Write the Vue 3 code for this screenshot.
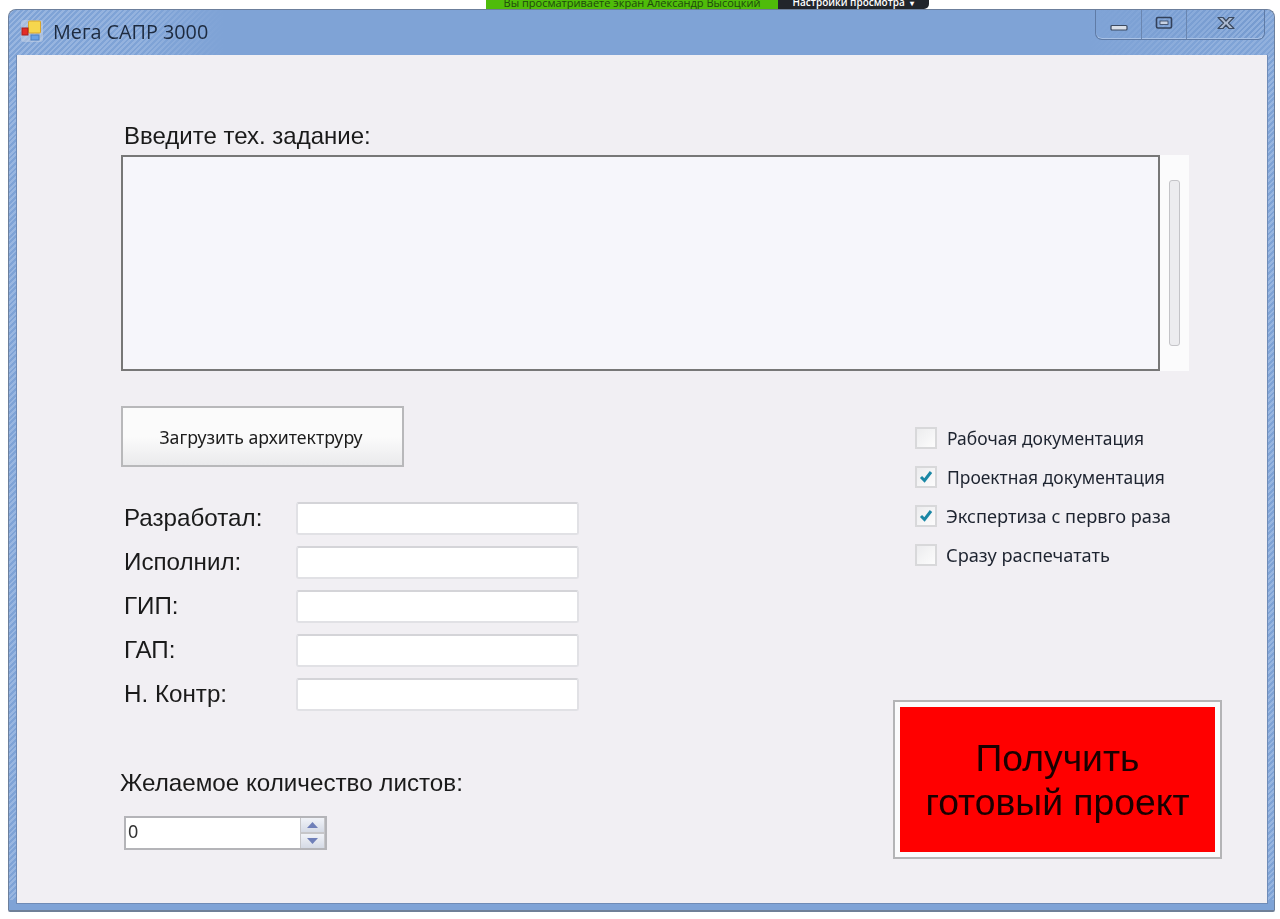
<script setup>
const people = ['Разработал:', 'Исполнил:', 'ГИП:', 'ГАП:', 'Н. Контр:']
const options = [
  { label: 'Рабочая документация', checked: false },
  { label: 'Проектная документация', checked: true },
  { label: 'Экспертиза с первго раза', checked: true },
  { label: 'Сразу распечатать', checked: false }
]
</script>

<template>
  <div class="page">
    <div class="share-bar">
      <span class="share-green">Вы просматриваете экран Александр Высоцкий</span>
      <span class="share-dark">Настройки просмотра <small>▾</small></span>
    </div>
    <div class="window">
      <header class="titlebar">
        <svg class="app-icon" width="24" height="24" viewBox="0 0 24 24">
          <rect x="1" y="1" width="22" height="22" rx="3" fill="#c9d3e6" opacity=".55" />
          <rect x="8.5" y="2" width="12" height="12" rx="1" fill="#f6d64e" stroke="#d9a52a" />
          <rect x="2" y="9" width="6" height="7" fill="#e42c25" stroke="#a82020" />
          <rect x="11" y="16" width="8" height="5" fill="#6aa2e6" stroke="#4c7fc0" />
        </svg>
        <span class="title">Мега САПР 3000</span>
        <div class="controls">
          <div class="ctl ctl-min">
            <svg width="18" height="8" viewBox="0 0 18 8"><rect x="1" y="1.5" width="16" height="4.5" rx="1" fill="#d9dfe8" stroke="#3c4a60" stroke-width="1.2" /></svg>
          </div>
          <div class="ctl ctl-max">
            <svg width="18" height="14" viewBox="0 0 18 14"><rect x="1.5" y="1.5" width="15" height="10.5" rx="1.5" fill="none" stroke="#33415a" stroke-width="1.6" /><rect x="5" y="5" width="8" height="3.5" fill="#c8d3e4" stroke="#33415a" stroke-width=".8" /></svg>
          </div>
          <div class="ctl ctl-close">
            <svg width="20" height="14" viewBox="0 0 20 14"><path d="M2 1.5 L7 1.5 L10 5 L13 1.5 L18 1.5 L12.5 7 L18 12.5 L13 12.5 L10 9 L7 12.5 L2 12.5 L7.5 7 Z" fill="#aebcd2" stroke="#3c4a60" stroke-width="1.2" stroke-linejoin="round" /></svg>
          </div>
        </div>
      </header>

      <main class="client">
        <label class="spec-label">Введите тех. задание:</label>
        <div class="spec">
          <div class="spec-box"></div>
          <div class="spec-scroll"><div class="thumb"></div></div>
        </div>

        <div class="lower">
          <section class="left">
            <button class="load-btn">Загрузить архитектруру</button>
            <div class="fields">
              <div v-for="p in people" :key="p" class="field">
                <span class="field-label">{{ p }}</span>
                <div class="field-input"></div>
              </div>
            </div>
            <div class="sheets-label">Желаемое количество листов:</div>
            <div class="spin">
              <span class="spin-value">0</span>
              <div class="spin-btns">
                <div class="spin-btn"><svg width="11" height="6" viewBox="0 0 11 6"><path d="M5.5 0 L11 6 L0 6 Z" fill="#6f7fb8" /></svg></div>
                <div class="spin-btn"><svg width="11" height="6" viewBox="0 0 11 6"><path d="M0 0 L11 0 L5.5 6 Z" fill="#6f7fb8" /></svg></div>
              </div>
            </div>
          </section>

          <section class="right">
            <div class="checks">
              <div v-for="(o, i) in options" :key="o.label" class="check" :class="{ tight: i > 1 }">
                <span class="box">
                  <svg v-if="o.checked" width="14" height="13" viewBox="0 0 14 13"><path d="M2 7 L5.5 10.5 L12 2" fill="none" stroke="#1a87a5" stroke-width="3" /></svg>
                </span>
                <span class="check-text">{{ o.label }}</span>
              </div>
            </div>
            <button class="go-btn">Получить<br />готовый проект</button>
          </section>
        </div>
      </main>
    </div>
  </div>
</template>

<style>
html, body { margin: 0; background: #fff; }
</style>

<style scoped>
.page {
  position: relative;
  width: 1280px;
  height: 919px;
  padding: 9px 5px 7px 8px;
  box-sizing: border-box;
  overflow: hidden;
  background: #fff;
  font-family: "Liberation Sans", Arial, sans-serif;
}
.share-bar {
  position: absolute;
  left: 486px;
  top: 0;
  height: 9px;
  display: flex;
  overflow: hidden;
  font-size: 11px;
  line-height: 5px;
  z-index: 2;
  font-family: "Open Sans", sans-serif;
}
.share-green {
  width: 292px;
  background: #4fbc0a;
  color: #1e4a0c;
  text-align: center;
}
.share-dark {
  width: 151px;
  background: #22252b;
  color: #fff;
  text-align: center;
  border-radius: 0 0 5px 0;
  font-size: 10px;
  font-weight: 600;
}
.share-dark small { font-size: 8px; margin-left: 3px; }
.window {
  height: 903px;
  box-sizing: border-box;
  display: flex;
  flex-direction: column;
  border: 1px solid #6c7f9c;
  border-bottom: 2px solid #6f7f97;
  border-radius: 8px 8px 2px 2px;
  padding: 0 7px 7px 8px;
  background:
    linear-gradient(to top, #7fa3d6 10px, rgba(127,163,214,0) 10px),
    repeating-linear-gradient(135deg, #7fa3d6 0 2px, #99b6e0 2px 4px);
  filter: blur(0.45px);
}
.titlebar {
  position: relative;
  height: 45px;
  margin: 0 -7px 0 -8px;
  padding: 0 0 3px 11px;
  box-sizing: border-box;
  display: flex;
  align-items: center;
  gap: 9px;
  flex: none;
  border-radius: 8px 8px 0 0;
  background:
    linear-gradient(90deg, rgba(127,163,214,0) 0, rgba(127,163,214,.2) 130px, #7fa3d6 215px, #7fa3d6 1080px, rgba(127,163,214,.3) 1200px),
    repeating-linear-gradient(135deg, #7fa3d6 0 2px, #99b6e0 2px 4px);
}
.app-icon { flex: none; }
.title {
  font-family: "Open Sans", sans-serif;
  font-size: 19.8px;
  color: #1d2a3e;
}
.controls {
  position: absolute;
  right: 9px;
  top: 0;
  height: 29px;
  display: flex;
  border: 1px solid #5f7ba6;
  border-top: 0;
  border-radius: 0 0 7px 7px;
  background:
    linear-gradient(100deg, #7fa3d6 0, rgba(127,163,214,.3) 100%),
    repeating-linear-gradient(135deg, #7398cd 0 2px, #99b6e0 2px 4px);
  box-shadow: inset 0 -1px 0 #a9c2e6;
}
.ctl {
  display: flex;
  align-items: center;
  justify-content: center;
  height: 100%;
  box-sizing: border-box;
}
.ctl-min { width: 46px; padding-top: 7px; border-right: 1px solid #6a86b0; }
.ctl-max { width: 45px; padding-bottom: 3px; border-right: 1px solid #6a86b0; }
.ctl-close { width: 77px; padding-bottom: 3px; }
.client {
  flex: 1;
  display: flex;
  flex-direction: column;
  padding: 0 0 0 104px;
  background: #f1eff3;
  box-shadow: 0 0 0 1px #6f8bb6;
  min-height: 0;
}
.spec-label {
  margin: 68px 0 0 3px;
  height: 32px;
  font-size: 24px;
  line-height: 26px;
  color: #1a1a1a;
}
.spec { display: flex; height: 216px; }
.spec-box {
  width: 1039px;
  box-sizing: border-box;
  border: 2px solid #777;
  background: #f6f6fb;
}
.spec-scroll {
  width: 29px;
  box-sizing: border-box;
  padding: 25px 9px 25px 9px;
  background: #fbfbfc;
}
.thumb {
  height: 100%;
  box-sizing: border-box;
  border: 1px solid #c4c4c8;
  border-radius: 3px;
  background: #ececef;
}
.lower {
  display: grid;
  grid-template-columns: 772px 329px;
  margin-top: 35px;
}
.left { display: flex; flex-direction: column; align-items: flex-start; padding-bottom: 9px; }
.load-btn {
  width: 283px;
  height: 61px;
  box-sizing: border-box;
  border: 2px solid #b8b8ba;
  background: linear-gradient(#fbfbfb 50%, #eaeaec);
  font-family: "Noto Sans", sans-serif;
  font-size: 17.7px;
  color: #1c1c1c;
  padding: 0 3px 0 0;
}
.fields {
  margin-top: 35px;
  display: flex;
  flex-direction: column;
  gap: 11px;
}
.field {
  display: flex;
  align-items: center;
  height: 33px;
}
.field-label {
  width: 175px;
  padding: 0 0 2px 3px;
  box-sizing: border-box;
  font-size: 24.2px;
  color: #1a1a1a;
}
.field-input {
  width: 283px;
  height: 33px;
  box-sizing: border-box;
  border: 2px solid #e1e1e5;
  border-top-color: #d4d4d8;
  border-radius: 3px;
  background: #fff;
}
.sheets-label {
  margin: 60px 0 0 -1px;
  height: 24px;
  font-size: 24.2px;
  line-height: 24px;
  color: #1a1a1a;
}
.spin {
  margin: 21px 0 0 3px;
  width: 203px;
  height: 34px;
  box-sizing: border-box;
  display: flex;
  justify-content: space-between;
  border: 2px solid #b4b4b8;
  background: #fff;
}
.spin-value {
  padding-left: 2px;
  font-family: "Noto Sans", sans-serif;
  font-size: 18px;
  line-height: 26px;
  color: #333;
}
.spin-btns {
  width: 25px;
  display: flex;
  flex-direction: column;
  gap: 2px;
  padding: 0 1px;
  background: #c6c6c9;
  box-sizing: border-box;
}
.spin-btn {
  flex: 1;
  display: flex;
  align-items: center;
  justify-content: center;
  background: linear-gradient(#f1f3f8, #d5dae5);
}
.right { display: flex; flex-direction: column; justify-content: space-between; }
.checks {
  margin: 12px 0 0 22px;
  display: flex;
  flex-direction: column;
}
.check {
  height: 39px;
  display: flex;
  align-items: center;
  gap: 10px;
}
.check.tight { gap: 9px; }
.box {
  width: 22px;
  height: 22px;
  box-sizing: border-box;
  border: 2px solid #d8d8da;
  background: linear-gradient(135deg, #ececee, #fcfcfc);
  display: flex;
  align-items: center;
  justify-content: center;
}
.check-text {
  font-family: "Noto Sans", sans-serif;
  font-size: 17.45px;
  color: #1e2430;
}
.check.tight .check-text { font-size: 18.2px; }
.go-btn {
  width: 329px;
  height: 159px;
  box-sizing: border-box;
  border: 2px solid #b4b4b6;
  padding: 0;
  outline: 5px solid #fbfbfc;
  outline-offset: -7px;
  background: #ff0000;
  font-family: "Liberation Sans", Arial, sans-serif;
  font-size: 37.3px;
  line-height: 44px;
  color: #1a0000;
}
</style>
